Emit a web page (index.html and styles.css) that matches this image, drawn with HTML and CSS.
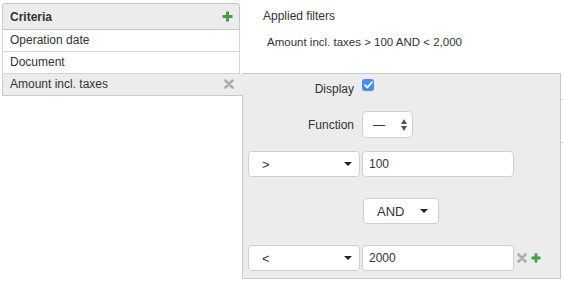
FILE: index.html
```html
<!DOCTYPE html>
<html lang="en">
<head>
    <meta charset="UTF-8">
    <title>Criteria filters</title>
    <link rel="stylesheet" href="styles.css">
</head>
<body>
    <div class="layout">
        <div class="criteria">
            <div class="criteria-header">
                <span>Criteria</span>
                <svg class="icon-plus" width="11" height="11" viewBox="0 0 11 11"><path d="M5.5 0.5 V10.5 M0.5 5.5 H10.5" stroke="#3fa33f" stroke-width="3"/></svg>
            </div>
            <div class="criteria-row">Operation date</div>
            <div class="criteria-row">Document</div>
            <div class="criteria-row selected">
                <span>Amount incl. taxes</span>
                <svg class="icon-remove" width="10" height="10" viewBox="0 0 10 10"><path d="M1.5 1.5 L8.5 8.5 M8.5 1.5 L1.5 8.5" stroke="#adadad" stroke-width="2.6" stroke-linecap="round"/></svg>
            </div>
        </div>

        <div class="applied">
            <h4>Applied filters</h4>
            <p>Amount incl. taxes &gt; 100 AND &lt; 2,000</p>
            <div class="results"></div>
        </div>
    </div>

    <div class="filter-panel">
        <div class="field">
            <label>Display</label>
            <span class="checkbox">
                <svg width="9" height="8" viewBox="0 0 9 8"><path d="M1 4.2 L3.4 6.5 L8 1.2" fill="none" stroke="#fff" stroke-width="1.8" stroke-linecap="round" stroke-linejoin="round"/></svg>
            </span>
        </div>

        <div class="field field-function">
            <label>Function</label>
            <div class="stepper">
                <span>&mdash;</span>
                <svg width="6" height="12" viewBox="0 0 6 12"><path d="M3 0 L6 5 L0 5 Z M0 7 L6 7 L3 12 Z" fill="#555"/></svg>
            </div>
        </div>

        <div class="condition">
            <div class="dropdown operator"><span>&gt;</span><i class="caret"></i></div>
            <div class="value">100</div>
        </div>

        <div class="dropdown joiner"><span>AND</span><i class="caret"></i></div>

        <div class="condition">
            <div class="dropdown operator"><span>&lt;</span><i class="caret"></i></div>
            <div class="value">2000</div>
            <svg class="icon-remove" width="10" height="10" viewBox="0 0 10 10"><path d="M1.5 1.5 L8.5 8.5 M8.5 1.5 L1.5 8.5" stroke="#adadad" stroke-width="2.6" stroke-linecap="round"/></svg>
            <svg class="icon-plus" width="10" height="10" viewBox="0 0 10 10"><path d="M5 0.5 V9.5 M0.5 5 H9.5" stroke="#3fa33f" stroke-width="2.8"/></svg>
        </div>
    </div>
</body>
</html>
```

FILE: styles.css
```css
* {
    margin: 0;
    padding: 0;
    box-sizing: border-box;
}

body {
    font-family: 'Liberation Sans', Arial, Helvetica, sans-serif;
    font-size: 12px;
    color: #333;
    background: white;
    padding: 3px 0 0 2px;
}

.layout {
    display: flex;
}

.criteria {
    width: 238px;
}

.criteria-header {
    height: 27px;
    display: flex;
    align-items: center;
    justify-content: space-between;
    padding: 0 6px 0 7px;
    background: #ececec;
    border: 1px solid #c6c6c6;
    border-radius: 3px 3px 0 0;
    font-weight: bold;
}

.criteria-row {
    height: 22px;
    display: flex;
    align-items: center;
    justify-content: space-between;
    padding: 0 6px 1px 7px;
    border: 1px solid #d4d4d4;
    border-top: none;
}

.criteria-row.selected {
    position: relative;
    z-index: 2;
    margin-right: -3px;
    padding-right: 9px;
    border-right: none;
    border-color: #c8c8c8;
    background: #ececec;
}

.applied {
    padding: 6px 0 0 23px;
    flex: 1;
}

.applied h4 {
    font-weight: normal;
    line-height: 14px;
}

.applied p {
    margin: 13px 0 0 4px;
    font-size: 11.5px;
}

.results {
    margin-top: 51px;
    height: 44px;
    border-top: 1px solid #e2e2e2;
    border-bottom: 1px solid #e2e2e2;
}

.filter-panel {
    position: absolute;
    left: 242px;
    top: 73px;
    width: 319px;
    height: 206px;
    z-index: 1;
    background: #ececec;
    border: 1px solid #c8c8c8;
    padding: 2px 0 0 5px;
}

.field {
    display: flex;
    align-items: center;
}

.field label {
    width: 106px;
    margin-right: 8px;
    text-align: right;
}

.field:first-child {
    height: 20px;
    align-items: flex-end;
}

.field:first-child label {
    line-height: 14px;
}

.checkbox {
    width: 12px;
    height: 12px;
    margin-bottom: 5px;
    border-radius: 3px;
    background: #3d8ef3;
    display: flex;
    align-items: center;
    justify-content: center;
}

.field-function {
    margin-top: 15px;
}

.stepper {
    width: 51px;
    height: 27px;
    display: flex;
    align-items: center;
    justify-content: space-between;
    padding: 0 5px 0 10px;
    background: white;
    border: 1px solid #cfcfcf;
    border-radius: 5px;
}

.condition {
    display: flex;
    align-items: center;
    gap: 2px;
    margin-top: 13px;
}

.condition:last-child {
    margin-top: 21px;
}

.dropdown {
    height: 26px;
    display: flex;
    align-items: center;
    justify-content: space-between;
    background: white;
    border: 1px solid #cfcfcf;
    border-radius: 4px;
    font-size: 13px;
}

.dropdown.operator {
    width: 112px;
    padding: 0 7px 0 13px;
}

.dropdown.joiner {
    width: 76px;
    margin: 21px 0 0 115px;
    padding: 0 10px 0 13px;
}

.caret {
    width: 0;
    height: 0;
    border-left: 4px solid transparent;
    border-right: 4px solid transparent;
    border-top: 4px solid #222;
}

.value {
    width: 152px;
    height: 26px;
    display: flex;
    align-items: center;
    padding: 0 6px;
    background: white;
    border: 1px solid #cfcfcf;
    border-radius: 4px;
}

.condition .icon-remove {
    margin-left: 1px;
}

.condition .icon-plus {
    margin-left: 2px;
}
```
